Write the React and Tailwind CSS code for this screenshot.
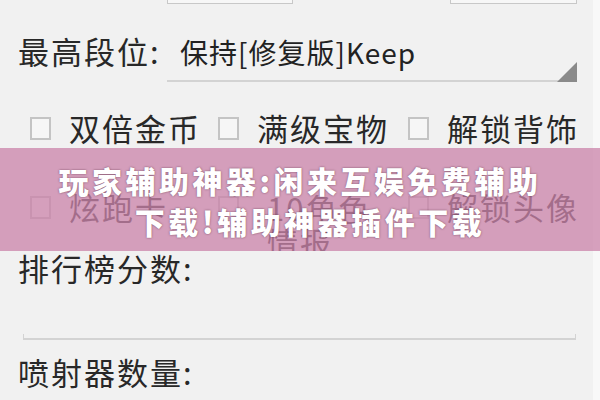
import React from "react";

function Box() {
  return (
    <span className="inline-block w-[21px] h-[23px] border-2 border-[#c4c4c4] bg-[#f6f6f6] shrink-0" />
  );
}

function Check({ children }) {
  return (
    <div className="flex items-start gap-[18px]">
      <div className="h-[32px] flex items-center">
        <Box />
      </div>
      <div className="text-[31px] leading-[32px] tracking-[2px] whitespace-nowrap">{children}</div>
    </div>
  );
}

export default function App() {
  return (
    <div className="w-[600px] h-[400px] overflow-hidden relative flex bg-[#f8f8f8] text-[#282828] font-['Noto_Sans_CJK_SC','Noto_Sans',sans-serif]">
      <div className="w-[593px] h-full bg-[#f1f1f1] flex flex-col">
        {/* top cut-off boxes */}
        <div className="flex h-[4px] shrink-0">
          <div className="ml-[167px] w-[126px] h-[4px] border-x border-b border-[#c8c8c8] bg-[#f7f7f7]" />
          <div className="ml-[157px] w-[127px] h-[4px] border-x border-b border-[#c8c8c8] bg-[#f7f7f7]" />
        </div>

        {/* spinner row */}
        <div className="flex h-[78px] shrink-0">
          <div className="w-[167px] shrink-0 pl-[18px] pt-[31px] text-[31px] leading-[32px] tracking-[2px] whitespace-nowrap">
            最高段位:
          </div>
          <div className="relative w-[410px] h-[78px] border-b-2 border-[#d3d3d3] pl-[13px] pt-[33px]">
            <div className="text-[28px] leading-[30px] tracking-[1px] text-[#222] whitespace-nowrap">
              保持[修复版]Keep
            </div>
            <svg className="absolute right-0 bottom-[-2px]" width="20" height="20" viewBox="0 0 20 20">
              <polygon points="20,0 20,20 0,20" fill="#8a8a8a" />
            </svg>
          </div>
        </div>

        {/* checkbox row 1 */}
        <div className="h-[66px] shrink-0 pt-[30px] pl-[30px] grid grid-cols-[188px_190px_1fr]">
          <Check>双倍金币</Check>
          <Check>满级宝物</Check>
          <Check>解锁背饰</Check>
        </div>

        {/* checkbox row 2 (under overlay) */}
        <div className="h-[103px] shrink-0 overflow-hidden pt-[43px] pl-[30px] grid grid-cols-[188px_190px_1fr]">
          <Check>炫跑卡</Check>
          <div className="flex items-start gap-[28px]">
            <div className="h-[32px] flex items-center">
              <Box />
            </div>
            <div className="text-[31px] leading-[34px] tracking-[2px] whitespace-nowrap">
              10角色
              <br />
              情报
            </div>
          </div>
          <Check>解锁头像</Check>
        </div>

        {/* leaderboard score */}
        <div className="shrink-0 mt-[1px] pl-[18px] text-[31px] leading-[32px] tracking-[2px] whitespace-nowrap">
          排行榜分数:
        </div>
        <div className="shrink-0 ml-[23px] w-[553px] mt-[50px] h-[6px] border-x border-b-2 border-[#d3d3d3]" />
        <div className="shrink-0 mt-[16px] pl-[18px] text-[31px] leading-[32px] tracking-[2px] whitespace-nowrap">
          喷射器数量:
        </div>
      </div>

      {/* pink overlay banner */}
      <div className="absolute left-0 top-[148px] w-[600px] h-[103px] bg-[rgba(202,132,170,0.76)] pt-[12px] flex flex-col items-center">
        <div className="text-white font-black text-[30px] leading-[41px] tracking-[3.5px] whitespace-nowrap [text-shadow:0_0_2px_rgba(70,30,50,0.7)]">
          玩家辅助神器:闲来互娱免费辅助
        </div>
        <div className="text-white font-black text-[30px] leading-[41px] tracking-[3.5px] whitespace-nowrap pl-[20px] [text-shadow:0_0_2px_rgba(70,30,50,0.7)]">
          下载!辅助神器插件下载
        </div>
      </div>
    </div>
  );
}
